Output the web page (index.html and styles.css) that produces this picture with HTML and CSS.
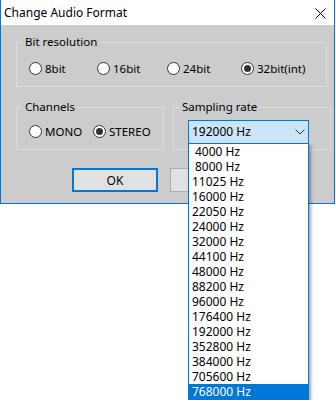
FILE: index.html
```html
<!DOCTYPE html>
<html lang="en">
<head>
    <meta charset="UTF-8">
    <title>Change Audio Format</title>
    <link rel="stylesheet" href="styles.css">
</head>
<body>
    <div class="window">
        <div class="titlebar">
            <span class="title">Change Audio Format</span>
            <svg class="close" width="11" height="11" viewBox="0 0 11 11">
                <path d="M0.5 0.5 L10.5 10.5 M10.5 0.5 L0.5 10.5" stroke="#000" stroke-width="1" fill="none"/>
            </svg>
        </div>

        <div class="client">
            <!-- Bit resolution -->
            <fieldset class="group group-bits">
                <legend>Bit resolution</legend>
                <div class="radio-row bits-row">
                    <label class="radio"><span class="dot"></span>8bit</label>
                    <label class="radio"><span class="dot"></span>16bit</label>
                    <label class="radio"><span class="dot"></span>24bit</label>
                    <label class="radio"><span class="dot checked"></span>32bit(int)</label>
                </div>
            </fieldset>

            <div class="group-row">
                <!-- Channels -->
                <fieldset class="group group-channels">
                    <legend>Channels</legend>
                    <div class="radio-row channels-row">
                        <label class="radio"><span class="dot"></span>MONO</label>
                        <label class="radio"><span class="dot checked"></span>STEREO</label>
                    </div>
                </fieldset>

                <!-- Sampling rate -->
                <fieldset class="group group-rate">
                    <legend>Sampling rate</legend>
                    <div class="combo">
                        <span class="combo-value"><span class="item-text">192000 Hz</span></span>
                        <svg class="chevron" width="10" height="6" viewBox="0 0 10 6">
                            <path d="M0.5 0.5 L5 5 L9.5 0.5" stroke="#333" stroke-width="1" fill="none"/>
                        </svg>
                        <ul class="combo-list">
                            <li><span class="item-text">4000 Hz</span></li>
                            <li><span class="item-text">8000 Hz</span></li>
                            <li><span class="item-text">11025 Hz</span></li>
                            <li><span class="item-text">16000 Hz</span></li>
                            <li><span class="item-text">22050 Hz</span></li>
                            <li><span class="item-text">24000 Hz</span></li>
                            <li><span class="item-text">32000 Hz</span></li>
                            <li><span class="item-text">44100 Hz</span></li>
                            <li><span class="item-text">48000 Hz</span></li>
                            <li><span class="item-text">88200 Hz</span></li>
                            <li><span class="item-text">96000 Hz</span></li>
                            <li><span class="item-text">176400 Hz</span></li>
                            <li><span class="item-text">192000 Hz</span></li>
                            <li><span class="item-text">352800 Hz</span></li>
                            <li><span class="item-text">384000 Hz</span></li>
                            <li><span class="item-text">705600 Hz</span></li>
                            <li class="selected"><span class="item-text">768000 Hz</span></li>
                        </ul>
                    </div>
                </fieldset>
            </div>

            <div class="buttons">
                <button class="btn btn-default">OK</button>
                <button class="btn">Cancel</button>
            </div>
        </div>
    </div>
</body>
</html>
```

FILE: styles.css
```css
/* Page */
html,
body {
    margin: 0;
    height: 400px;
    overflow: hidden;
    background-color: #fff;
}

body {
    font-family: "Segoe UI", "Noto Sans", sans-serif;
    font-size: 11.5px;
    color: #000;
}

/* Dialog window */
.window {
    width: 335px;
    box-sizing: border-box;
    border: 1px solid #0078d7;
    border-top: 0;
}

.titlebar {
    height: 25px;
    display: flex;
    align-items: center;
    justify-content: space-between;
    padding: 0 8px 0 3px;
    background-color: #fff;
}

.title {
    font-size: 12px;
    line-height: 16px;
}

.close {
    display: block;
    margin-top: 1px;
}

.client {
    height: 178px;
    box-sizing: border-box;
    padding: 9px 0 0 15px;
    background-color: #ccc;
}

/* Group boxes */
.group {
    margin: 0;
    padding: 0;
    min-width: 0;
    border: 1px solid #dcdcdc;
    box-sizing: border-box;
}

.group legend {
    margin-left: 5px;
    padding: 0 3px;
    line-height: 16px;
}

.group-bits {
    width: 311px;
}

.group-row {
    display: flex;
    gap: 9px;
    margin-top: 12px;
}

.group-channels {
    width: 148px;
}

.group-rate {
    width: 158px;
}

/* Radio buttons */
.radio-row {
    display: grid;
    padding: 10px 0 10px 12px;
}

.bits-row {
    grid-template-columns: 68px 70px 74px auto;
}

.channels-row {
    grid-template-columns: 64px auto;
    padding-top: 8px;
}

.radio {
    display: flex;
    align-items: center;
    height: 16px;
    white-space: nowrap;
}

.dot {
    position: relative;
    width: 13px;
    height: 13px;
    margin-right: 3px;
    box-sizing: border-box;
    border: 1px solid #333;
    border-radius: 50%;
    background-color: #fff;
}

.dot.checked::after {
    content: "";
    position: absolute;
    left: 2px;
    top: 2px;
    width: 7px;
    height: 7px;
    border-radius: 50%;
    background-color: #333;
}

/* Combo box */
.combo {
    position: relative;
    width: 121px;
    height: 24px;
    margin: 5px 0 5px 14px;
    box-sizing: border-box;
    border: 1px solid #0078d7;
    background-color: #cce4f7;
    display: flex;
    align-items: center;
    justify-content: space-between;
    padding: 0 3px 0 0;
}

.combo-value {
    font-size: 12px;
    line-height: 16px;
}

.item-text {
    display: inline-block;
    width: 51px;
    margin-left: 3px;
    text-align: center;
    white-space: nowrap;
}

.chevron {
    display: block;
}

/* Opened drop-down list */
.combo-list {
    position: absolute;
    left: -1px;
    top: 22px;
    width: 121px;
    box-sizing: border-box;
    margin: 0;
    padding: 0;
    list-style: none;
    font-size: 12px;
    border: 1px solid #0078d7;
    background-color: #fff;
    box-shadow: 2px 2px 3px rgba(0, 0, 0, 0.35);
}

.combo-list li {
    height: 15px;
    line-height: 15px;
}

.combo-list li.selected {
    background-color: #0078d7;
    color: #fff;
}

/* Buttons */
.buttons {
    display: flex;
    gap: 12px;
    margin: 18px 0 0 56px;
}

.btn {
    width: 86px;
    height: 24px;
    padding: 0;
    font-family: inherit;
    font-size: 12px;
    color: #000;
    background-color: #e1e1e1;
    border: 1px solid #adadad;
}

.btn-default {
    border: 2px solid #0078d7;
}
```
